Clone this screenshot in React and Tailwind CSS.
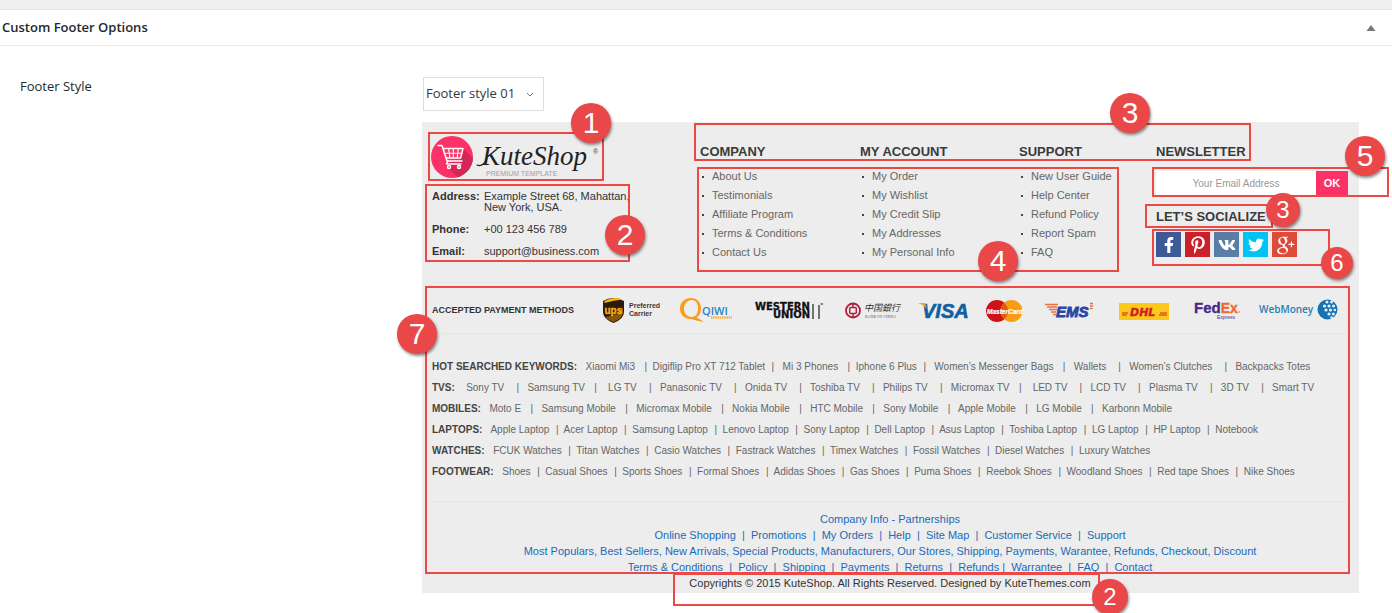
import React from "react";
import { FaFacebookF, FaPinterestP, FaVk, FaTwitter } from "react-icons/fa";
import { TiSocialGooglePlus } from "react-icons/ti";

const columns = [
  { title: "COMPANY", items: ["About Us", "Testimonials", "Affiliate Program", "Terms & Conditions", "Contact Us"] },
  { title: "MY ACCOUNT", items: ["My Order", "My Wishlist", "My Credit Slip", "My Addresses", "My Personal Info"] },
  { title: "SUPPORT", items: ["New User Guide", "Help Center", "Refund Policy", "Report Spam", "FAQ"] },
];

const keywords = [
  ["HOT SEARCHED KEYWORDS:", "  Xiaomi Mi3   |  Digiflip Pro XT 712 Tablet  |   Mi 3 Phones   |  Iphone 6 Plus  |   Women’s Messenger Bags   |   Wallets    |   Women’s Clutches    |   Backpacks Totes"],
  ["TVS:", "   Sony TV    |   Samsung TV   |    LG TV    |   Panasonic TV    |   Onida TV    |   Toshiba TV    |   Philips TV    |   Micromax TV   |    LED TV    |   LCD TV    |   Plasma TV    |   3D TV    |   Smart TV"],
  ["MOBILES:", "  Moto E   |   Samsung Mobile   |   Micromax Mobile   |   Nokia Mobile   |   HTC Mobile   |   Sony Mobile   |   Apple Mobile   |   LG Mobile   |   Karbonn Mobile"],
  ["LAPTOPS:", "  Apple Laptop  |  Acer Laptop  |  Samsung Laptop  |  Lenovo Laptop  |  Sony Laptop  |  Dell Laptop  |  Asus Laptop  |  Toshiba Laptop  |  LG Laptop  |  HP Laptop  |  Notebook"],
  ["WATCHES:", "  FCUK Watches  |  Titan Watches  |  Casio Watches  |  Fastrack Watches  |  Timex Watches  |  Fossil Watches  |  Diesel Watches  |  Luxury Watches"],
  ["FOOTWEAR:", "  Shoes  |  Casual Shoes  |  Sports Shoes  |  Formal Shoes  |  Adidas Shoes  |  Gas Shoes  |  Puma Shoes  |  Reebok Shoes  |  Woodland Shoes  |  Red tape Shoes  |  Nike Shoes"],
];

const infoLines = [
  "Company Info - Partnerships",
  "Online Shopping  |  Promotions  |  My Orders  |  Help  |  Site Map  |  Customer Service  |  Support",
  "Most Populars, Best Sellers, New Arrivals, Special Products, Manufacturers, Our Stores, Shipping, Payments, Warantee, Refunds, Checkout, Discount",
  "Terms & Conditions  |  Policy  |  Shipping  |  Payments  |  Returns  |  Refunds |  Warrantee  |  FAQ  |  Contact",
];

const socials = [
  { label: "Facebook", Icon: FaFacebookF, box: "bg-[#3c5a98]", icon: "size-4" },
  { label: "Pinterest", Icon: FaPinterestP, box: "bg-[#cc1f2a]", icon: "size-[18px]" },
  { label: "VK", Icon: FaVk, box: "bg-[#587ea6]", icon: "size-[18px]" },
  { label: "Twitter", Icon: FaTwitter, box: "bg-[#00c3f5]", icon: "size-4" },
  { label: "Google Plus", Icon: TiSocialGooglePlus, box: "bg-[#dc4a38]", icon: "size-7 shrink-0" },
];

const frames = [
  "left-[6px] top-[10px] w-[176px] h-[49px]",
  "left-[3px] top-[62px] w-[205px] h-[78px]",
  "left-[272px] top-[1px] w-[557px] h-[38px]",
  "left-[275px] top-[45px] w-[422px] h-[105px]",
  "left-[730px] top-[45px] w-[237px] h-[30px]",
  "left-[723px] top-[82px] w-[128px] h-[24px]",
  "left-[730px] top-[107px] w-[178px] h-[37px]",
  "left-[3px] top-[164px] w-[925px] h-[288px]",
  "left-[251px] top-[451px] w-[427px] h-[33px]",
];

const badges = [
  { n: 1, at: "left-[149px] top-[-19px] size-10 text-[30px]" },
  { n: 2, at: "left-[183px] top-[93px] size-10 text-[30px]" },
  { n: 3, at: "left-[688px] top-[-29px] size-10 text-[30px]" },
  { n: 3, at: "left-[844px] top-[71px] size-[34px] text-[24px]" },
  { n: 4, at: "left-[556px] top-[119px] size-10 text-[30px]" },
  { n: 5, at: "left-[923px] top-[14px] size-10 text-[30px]" },
  { n: 6, at: "left-[899px] top-[125px] size-8 text-[24px]" },
  { n: 7, at: "left-[-25px] top-[192px] size-10 text-[30px]" },
  { n: 2, at: "left-[670px] top-[457px] size-9 text-[24px]" },
];

function LinkRun({ text, linkClass }) {
  return text.split("|").map((part, i) => {
    const name = part.trim();
    const [before, after] = part.split(name);
    return (
      <React.Fragment key={i}>
        {i > 0 && "|"}
        {before}
        <a href="#" className={linkClass}>{name}</a>
        {after}
      </React.Fragment>
    );
  });
}

function Logo() {
  return (
    <svg viewBox="0 0 170 46" className="-ml-px h-[46px] w-[170px]" role="img" aria-label="KuteShop Premium Template">
      <defs>
        <clipPath id="disc"><circle cx="21" cy="23" r="21" /></clipPath>
      </defs>
      <circle cx="21" cy="23" r="21" fill="#fb3167" />
      <path d="M32 14 L50 32 L34 50 L14 31 L30 25Z" fill="#d3265a" clipPath="url(#disc)" />
      <g fill="none" stroke="#fff" strokeWidth="1.5" strokeLinecap="round" strokeLinejoin="round">
        <path d="M7 11.500h4l5 15.500h15M11.800 14.500h20.200l-2.400 9.500h-14.500M17 27l-1.500 3h14.500" />
        <path d="M13 19.200h18M17.500 14.500l1.500 9.500M22.300 14.500v9.500M27.300 14.500l-1.200 9.500" strokeWidth="1.100" />
        <circle cx="18" cy="33" r="1.500" />
        <circle cx="28" cy="33" r="1.500" />
      </g>
      <path d="M46 31c5 2 8-2 10-7" fill="none" stroke="#222" strokeWidth="1.200" strokeLinecap="round" />
      <text x="51" y="31" fontFamily="Liberation Serif, serif" fontStyle="italic" fontSize="27" fill="#222">KuteShop</text>
      <text x="162" y="20" fontFamily="Liberation Sans, sans-serif" fontSize="7" fill="#444">®</text>
      <text x="55" y="42" fontFamily="Liberation Sans, sans-serif" fontSize="7" fill="#a0a0a0">PREMIUM TEMPLATE</text>
    </svg>
  );
}

const sans = "Liberation Sans, sans-serif";
const wide = "DejaVu Sans, sans-serif";

function PaymentLogos() {
  return (
    <>
      <svg viewBox="0 0 62 28" className="h-7 w-[62px]" role="img" aria-label="UPS Preferred Carrier">
        <path d="M1 4Q11-2 22 4V15Q22 22 11.500 26Q1 22 1 15Z" fill="#2d1a0c" />
        <path d="M2.500 6Q12 3 20.500 2.500Q12-1 2.500 4Z" fill="#f7b516" />
        <path d="M3 20Q16 19 21 10V15Q21 21 11.500 25Q6 23 3 20Z" fill="#8a5708" />
        <text x="2.500" y="17" fontFamily={sans} fontWeight="bold" fontSize="10" fill="#fbb51a" stroke="#fbb51a" strokeWidth=".3">ups</text>
        <g fontFamily={sans} fontWeight="bold" fontSize="7" fill="#3f3835">
          <text x="27" y="11">Preferred</text>
          <text x="27" y="19">Carrier</text>
        </g>
      </svg>
      <svg viewBox="0 0 59 28" className="h-7 w-[59px]" role="img" aria-label="QIWI">
        <path fillRule="evenodd" d="M11 1C17 1 21 5.500 21 11.500C21 16 19 19 16.500 20.500Q20 22 24 25Q17 24 11 22C4 22 0 17.500 0 11.500S5 1 11 1ZM12 3C7 3 4 7 4 12S8 20 12 20S18 16 18 11.500S16 3 12 3Z" fill="#f99b1c" />
        <text x="22" y="18" fontFamily="Open Sans, sans-serif" fontWeight="600" fontSize="11" fill="#2384c6">QIWI</text>
        <path d="M31 20.500h21" stroke="#f5b04d" strokeWidth="2.500" strokeDasharray="1.500 .7" />
      </svg>
      <svg viewBox="0 0 74 28" className="h-7 w-[74px]" role="img" aria-label="Western Union">
        <g fontFamily={wide} fontWeight="bold" fill="#111" stroke="#111" strokeWidth=".3">
          <text x="0" y="13" fontSize="10">WESTERN</text>
          <text x="18" y="21" fontSize="10">UNION</text>
        </g>
        <path d="M58 7v15M64 8v14M67.500 7.500v-.500h-2" fill="none" stroke="#222" strokeWidth="1.200" />
      </svg>
      <svg viewBox="0 0 57 28" className="h-7 w-[57px]" role="img" aria-label="Bank of China">
        <g fill="none" stroke="#b01f3c">
          <circle cx="8" cy="13.500" r="7" strokeWidth="1.800" />
          <rect x="4.700" y="10.500" width="6.600" height="6" rx="1" strokeWidth="1.500" />
          <path d="M8 6.500v4M8 16.500v4" strokeWidth="1.500" />
        </g>
        <text x="19" y="14" fontFamily="Noto Sans CJK SC, sans-serif" fontStyle="italic" fontSize="9" fill="#333">中国銀行</text>
        <text x="20" y="21" fontFamily="Liberation Serif, serif" fontSize="4" fill="#555">BANK OF CHINA</text>
      </svg>
      <svg viewBox="0 0 52 28" className="h-7 w-[52px]" role="img" aria-label="Visa">
        <text x="4" y="21" fontFamily={sans} fontWeight="bold" fontStyle="italic" fontSize="20" fill="#0f5fa6" stroke="#0f5fa6" strokeWidth=".6">VISA</text>
        <path d="M0 6h7l2 6Q6 8 0 6Z" fill="#f2a71e" />
      </svg>
      <svg viewBox="0 0 43 28" className="h-7 w-[43px]" role="img" aria-label="MasterCard">
        <circle cx="11" cy="14" r="11" fill="#cc1417" />
        <circle cx="25.500" cy="14" r="11" fill="#f99c10" />
        <path d="M18.250 5.700a11 11 0 0 1 0 16.600a11 11 0 0 1 0-16.600" fill="#e15a14" />
        <text x="1" y="16.500" fontFamily={sans} fontWeight="bold" fontStyle="italic" fontSize="6.500" fill="#fff" stroke="#fff" strokeWidth=".2">MasterCard</text>
      </svg>
      <svg viewBox="0 0 58 28" className="h-7 w-[58px]" role="img" aria-label="EMS">
        <path d="M0 7.500h13M2 10h10M4 12.500h8M6 15h5M8 17.500h3" stroke="#ee7040" strokeWidth="1.700" />
        <text x="11" y="20" fontFamily={sans} fontWeight="bold" fontStyle="italic" fontSize="15" fill="#2646a3" stroke="#2646a3" strokeWidth=".8">EMS</text>
        <path d="M45 6.500h3M45 9h3M45 11.500h2.500" stroke="#ee7040" strokeWidth="1.500" />
      </svg>
      <svg viewBox="0 0 59 28" className="h-7 w-[59px]" role="img" aria-label="DHL">
        <rect y="6" width="50" height="17" fill="#fcc91a" />
        <text x="11" y="18.500" fontFamily={wide} fontWeight="bold" fontStyle="italic" fontSize="11" fill="#cf2027" stroke="#cf2027" strokeWidth=".4">DHL</text>
        <path d="M3 16h6M3 18h5M41 16h7M40 18h8" stroke="#cf2027" strokeWidth="1" />
      </svg>
      <svg viewBox="0 0 49 28" className="h-7 w-[49px]" role="img" aria-label="FedEx Express">
        <g fontFamily={sans} fontWeight="bold" fontSize="15" strokeWidth=".3">
          <text x="0" y="16" fill="#46288a" stroke="#46288a">
            Fed<tspan fill="#f2662a" stroke="#f2662a" fontSize="14">Ex</tspan>
          </text>
        </g>
        <circle cx="45" cy="15" r="1" fill="#f29a70" />
        <text x="23" y="22" fontFamily={sans} fontSize="5" fill="#46288a">Express</text>
      </svg>
      <svg viewBox="0 0 79 28" className="h-7 w-[79px]" role="img" aria-label="WebMoney">
        <text x="0" y="16" fontFamily="Open Sans, sans-serif" fontWeight="600" fontSize="10" fill="#2680b5">WebMoney</text>
        <circle cx="68.500" cy="12.500" r="10" fill="#1772b0" />
        <g fill="#e6f1f7">
          <circle cx="68" cy="5" r="1.500" /><circle cx="72.500" cy="5" r="1.500" />
          <circle cx="65.500" cy="9" r="1.600" /><circle cx="70" cy="9" r="1.600" /><circle cx="74.500" cy="9" r="1.500" />
          <circle cx="67" cy="13" r="1.600" /><circle cx="71.500" cy="13" r="1.600" /><circle cx="75.800" cy="13" r="1.300" />
          <circle cx="70" cy="17" r="1.600" /><circle cx="74.300" cy="17" r="1.500" />
          <circle cx="72.500" cy="20.500" r="1.300" />
        </g>
      </svg>
    </>
  );
}

function FooterPreview() {
  return (
    <footer className="relative bg-[#ededed] pb-0.5 pl-[10px] pr-[11px] font-['Liberation_Sans',Arial,sans-serif] text-[11px] text-[#666]">
      <div className="grid grid-cols-[268fr_160fr_159fr_137fr_192fr] pb-5">
        <section className="pt-3">
          <Logo />
          <dl className="mt-[11px] grid grid-cols-[52px_1fr] gap-y-[11px] leading-[11px] text-[#333]">
            <dt className="font-bold">Address:</dt>
            <dd>Example Street 68, Mahattan,<br />New York, USA.</dd>
            <dt className="font-bold">Phone:</dt>
            <dd>+00 123 456 789</dd>
            <dt className="font-bold">Email:</dt>
            <dd>support@business.com</dd>
          </dl>
        </section>
        {columns.map((col) => (
          <section key={col.title} className="pt-[22px]">
            <h3 className="text-[13px] font-bold leading-4 text-[#3a3a3a]">{col.title}</h3>
            <ul className="mt-[7px] leading-[19px]">
              {col.items.map((item) => (
                <li key={item} className="flex items-center gap-2">
                  <span className="ml-0.5 size-0.5 bg-[#444]" />
                  <a href="#">{item}</a>
                </li>
              ))}
            </ul>
          </section>
        ))}
        <section className="pt-[22px]">
          <h3 className="text-[13px] font-bold leading-4 text-[#3a3a3a]">NEWSLETTER</h3>
          <form className="mt-[11px] flex h-6" onSubmit={(e) => e.preventDefault()}>
            <input
              type="email"
              aria-label="Your Email Address"
              placeholder="Your Email Address"
              className="min-w-0 flex-1 bg-white text-center text-[10px] text-[#666] outline-none placeholder:text-[#999]"
            />
            <button type="submit" className="w-8 bg-[#fb3167] text-[11px] font-bold text-white">OK</button>
          </form>
          <h3 className="mt-[14px] text-[13px] font-bold leading-4 text-[#3a3a3a]">LET’S SOCIALIZE</h3>
          <div className="mt-[7px] flex gap-1">
            {socials.map(({ label, Icon, box, icon }) => (
              <a key={label} href="#" aria-label={label} className={`flex size-[25px] items-center justify-center text-white ${box}`}>
                <Icon className={icon} />
              </a>
            ))}
          </div>
        </section>
      </div>

      <section className="flex items-center border-y border-[#e6e6e6] pb-2 pt-[14px]">
        <h3 className="w-[170px] whitespace-nowrap text-[9px] font-bold text-[#333]">ACCEPTED PAYMENT METHODS</h3>
        <div className="flex flex-1 gap-4">
          <PaymentLogos />
        </div>
      </section>

      <section className="border-b border-[#e6e6e6] pb-[19px] pt-[22px] text-[10px] leading-[21px]">
        {keywords.map(([title, links]) => (
          <p key={title} className="whitespace-pre">
            <strong className="mr-[3px] text-[#444]">{title}</strong>
            <LinkRun text={links} linkClass="mr-px" />
          </p>
        ))}
      </section>

      <section className="pt-[9px] text-center leading-4">
        {infoLines.map((line) => (
          <p key={line} className="whitespace-pre text-[#1a6bb8]"><LinkRun text={line} /></p>
        ))}
        <p className="text-[#333]">Copyrights © 2015 KuteShop. All Rights Reserved. Designed by KuteThemes.com</p>
      </section>

      {frames.map((at) => (
        <span key={at} className={`pointer-events-none absolute border-2 border-[#ee4844] ${at}`} />
      ))}
      {badges.map(({ n, at }) => (
        <span key={at} className={`absolute flex items-center justify-center rounded-full bg-[#e94748] leading-none text-white shadow-[1px_2px_3px_rgba(0,0,0,0.45)] ${at}`}>
          {n}
        </span>
      ))}
    </footer>
  );
}

export default function App() {
  return (
    <main className="min-h-screen overflow-hidden bg-white pb-5 font-['Open_Sans','Noto_Sans',sans-serif] text-[#23282d]">
      <div className="h-[10px] border-b border-[#e2e2e2] bg-[#f0f0f0]" />
      <header className="flex h-9 items-center justify-between border-b border-[#eaeaea] pl-0.5 pr-4">
        <h2 className="text-[13px] font-semibold">Custom Footer Options</h2>
        <button type="button" aria-label="Toggle panel">
          <svg viewBox="0 0 10 6" className="h-1.5 w-[10px]"><path d="M5 0l4.500 6h-9z" fill="#72777c" /></svg>
        </button>
      </header>
      <div className="flex pl-5 pr-[33px] pt-[31px]">
        <label htmlFor="footer-style" className="w-[402px] shrink-0 text-[13px] font-medium leading-[18px]">Footer Style</label>
        <div className="min-w-0 flex-1">
          <div className="relative ml-px h-[34px] w-[121px]">
            <select id="footer-style" className="size-full appearance-none border border-[#ddd] bg-white pl-0.5 text-[13px] text-[#32373c]">
              <option>Footer style 01</option>
            </select>
            <svg viewBox="0 0 8 6" className="pointer-events-none absolute right-[10px] top-[15px] h-1.5 w-2">
              <path d="M1 1l3 3 3-3" fill="none" stroke="#777" />
            </svg>
          </div>
          <div className="mt-[11px]">
            <FooterPreview />
          </div>
        </div>
      </div>
    </main>
  );
}
